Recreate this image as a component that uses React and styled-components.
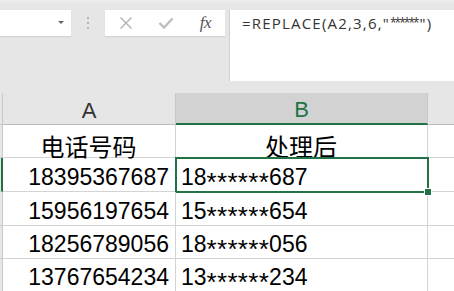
import { createGlobalStyle, styled } from 'styled-components'

const GREEN = '#217346'
const GRID = '#d4d4d4'

const Global = createGlobalStyle`
  html, body { margin: 0; padding: 0; background: #fff; overflow: hidden; }
  * { box-sizing: border-box; }
`

const rows = [
  { a: '电话号码', b: '处理后', head: true, h: 33 },
  { a: '18395367687', b: ['18', '687'], h: 34, selected: true },
  { a: '15956197654', b: ['15', '654'], h: 34 },
  { a: '18256789056', b: ['18', '056'], h: 33 },
  { a: '13767654234', b: ['13', '234'], h: 33 },
]

function App(){
  return (
    <>
      <Global />
      <Page>
        <Toolbar>
          <NameBox>
            <Caret />
          </NameBox>
          <Grip>
            <i /><i /><i />
          </Grip>
          <FuncButtons>
            <svg width="14" height="14" viewBox="0 0 14 14">
              <path d="M1.5 1.5 L12.5 12.5 M12.5 1.5 L1.5 12.5" stroke="#b3b3b3" strokeWidth="1.4" fill="none" />
            </svg>
            <svg width="16" height="12" viewBox="0 0 16 12">
              <path d="M1.5 6 L6 10.5 L14.5 1.5" stroke="#bdbdbd" strokeWidth="2.4" fill="none" />
            </svg>
            <Fx>fx</Fx>
          </FuncButtons>
          <FormulaBar>=REPLACE(A2,3,6,"<FStars>******</FStars>")</FormulaBar>
        </Toolbar>
        <Sheet>
          <Corner />
          <ColHead>A</ColHead>
          <ColHead $active>B</ColHead>
          <ColHead $last />
          {rows.map((r, i) => (
            <Row key={i} r={r} />
          ))}
        </Sheet>
      </Page>
    </>
  )
}

function Row({ r }){
  return (
    <>
      <RowHead $h={r.h} $active={r.selected} />
      <Cell $h={r.h} $align={r.head ? 'center' : 'right'} $cjk={r.head}>{r.a}</Cell>
      <Cell $h={r.h} $align={r.head ? 'center' : 'left'} $cjk={r.head} $selected={r.selected}>
        {r.head ? r.b : (<>{r.b[0]}<Stars>******</Stars>{r.b[1]}</>)}
      </Cell>
      <Cell $h={r.h} $last />
    </>
  )
}

export default App

const Page = styled.div`
  width: 454px;
  height: 291px;
  overflow: hidden;
  background: #fff;
`

const Toolbar = styled.div`
  height: 93px;
  background: linear-gradient(#eeeeee 0, #e6e6e6 4px);
  display: flex;
  align-items: flex-start;
  padding-top: 10px;
`

const NameBox = styled.div`
  width: 71px;
  height: 26px;
  background: #fff;
  box-shadow: 0 1px 1px rgba(0,0,0,0.08);
  position: relative;
`

const Caret = styled.span`
  position: absolute;
  left: 58px;
  top: 11px;
  width: 0;
  height: 0;
  border-left: 3px solid transparent;
  border-right: 3px solid transparent;
  border-top: 3px solid #666;
`

const Grip = styled.div`
  width: 34px;
  height: 26px;
  display: flex;
  flex-direction: column;
  align-items: center;
  justify-content: center;
  gap: 3px;
  & i{
    width: 2px;
    height: 2px;
    background: #b5b5b5;
  }
`

const FuncButtons = styled.div`
  width: 120px;
  height: 26px;
  background: #fff;
  box-shadow: 0 1px 1px rgba(0,0,0,0.08);
  display: flex;
  align-items: center;
  justify-content: space-between;
  padding: 0 14px 0 14px;
`

const Fx = styled.span`
  font-family: "Liberation Serif", serif;
  font-style: italic;
  font-size: 17px;
  color: #555;
  letter-spacing: -0.5px;
`

const FormulaBar = styled.div`
  flex: 1;
  margin-left: 4px;
  height: 71px;
  background: #fff;
  border-left: 1px solid #d0d0d0;
  font-family: "Open Sans", sans-serif;
  font-size: 15px;
  letter-spacing: 1.2px;
  color: #333;
  padding: 4px 0 0 12px;
  line-height: 18px;
  white-space: nowrap;
`

const FStars = styled.span`
  font-size: 12px;
  letter-spacing: -2px;
  position: relative;
  top: -2px;
  margin-right: 2px;
`

const Sheet = styled.div`
  display: grid;
  grid-template-columns: 3px 173px 252px 1fr;
`

const Corner = styled.div`
  background: #e6e6e6;
  border-right: 1px solid #c8c8c8;
  border-bottom: 1px solid #c8c8c8;
  height: 32px;
`

const ColHead = styled.div`
  height: 32px;
  background: ${p => p.$active ? '#d2d2d2' : '#e6e6e6'};
  color: ${p => p.$active ? GREEN : '#333'};
  border-right: ${p => p.$last ? 'none' : '1px solid #c8c8c8'};
  border-bottom: ${p => p.$active ? `2px solid ${GREEN}` : '1px solid #bdbdbd'};
  font-family: "Liberation Sans", Arial, sans-serif;
  font-size: 22px;
  display: flex;
  align-items: center;
  justify-content: center;
  padding-top: 4px;
`

const RowHead = styled.div`
  height: ${p => p.$h}px;
  background: #e6e6e6;
  border-right: ${p => p.$active ? `2px solid ${GREEN}` : '1px solid #c8c8c8'};
  border-bottom: 1px solid #c8c8c8;
`

const Cell = styled.div`
  height: ${p => p.$h}px;
  border-right: ${p => p.$last ? 'none' : `1px solid ${GRID}`};
  border-bottom: 1px solid ${GRID};
  display: flex;
  align-items: flex-end;
  justify-content: ${p => p.$align === 'center' ? 'center' : p.$align === 'right' ? 'flex-end' : 'flex-start'};
  padding: 0 6px ${p => p.$cjk ? 0 : 1}px 5px;
  font-family: ${p => p.$cjk ? '"Noto Sans CJK SC", sans-serif' : '"Liberation Sans", Arial, sans-serif'};
  font-size: ${p => p.$cjk ? '24px' : '23px'};
  line-height: ${p => p.$cjk ? 22 : 26}px;
  color: #000;
  white-space: nowrap;
  position: relative;
  ${p => p.$selected && `
    &::after{
      content: "";
      position: absolute;
      left: -1px;
      top: -1px;
      right: -2px;
      bottom: -2px;
      border: 2px solid ${GREEN};
    }
    &::before{
      content: "";
      position: absolute;
      right: -5px;
      bottom: -5px;
      width: 6px;
      height: 6px;
      background: ${GREEN};
      border: 1px solid #fff;
      z-index: 1;
    }
  `}
`

const Stars = styled.span`
  font-size: 26px;
  letter-spacing: 0.3px;
  position: relative;
  top: 5px;
`
